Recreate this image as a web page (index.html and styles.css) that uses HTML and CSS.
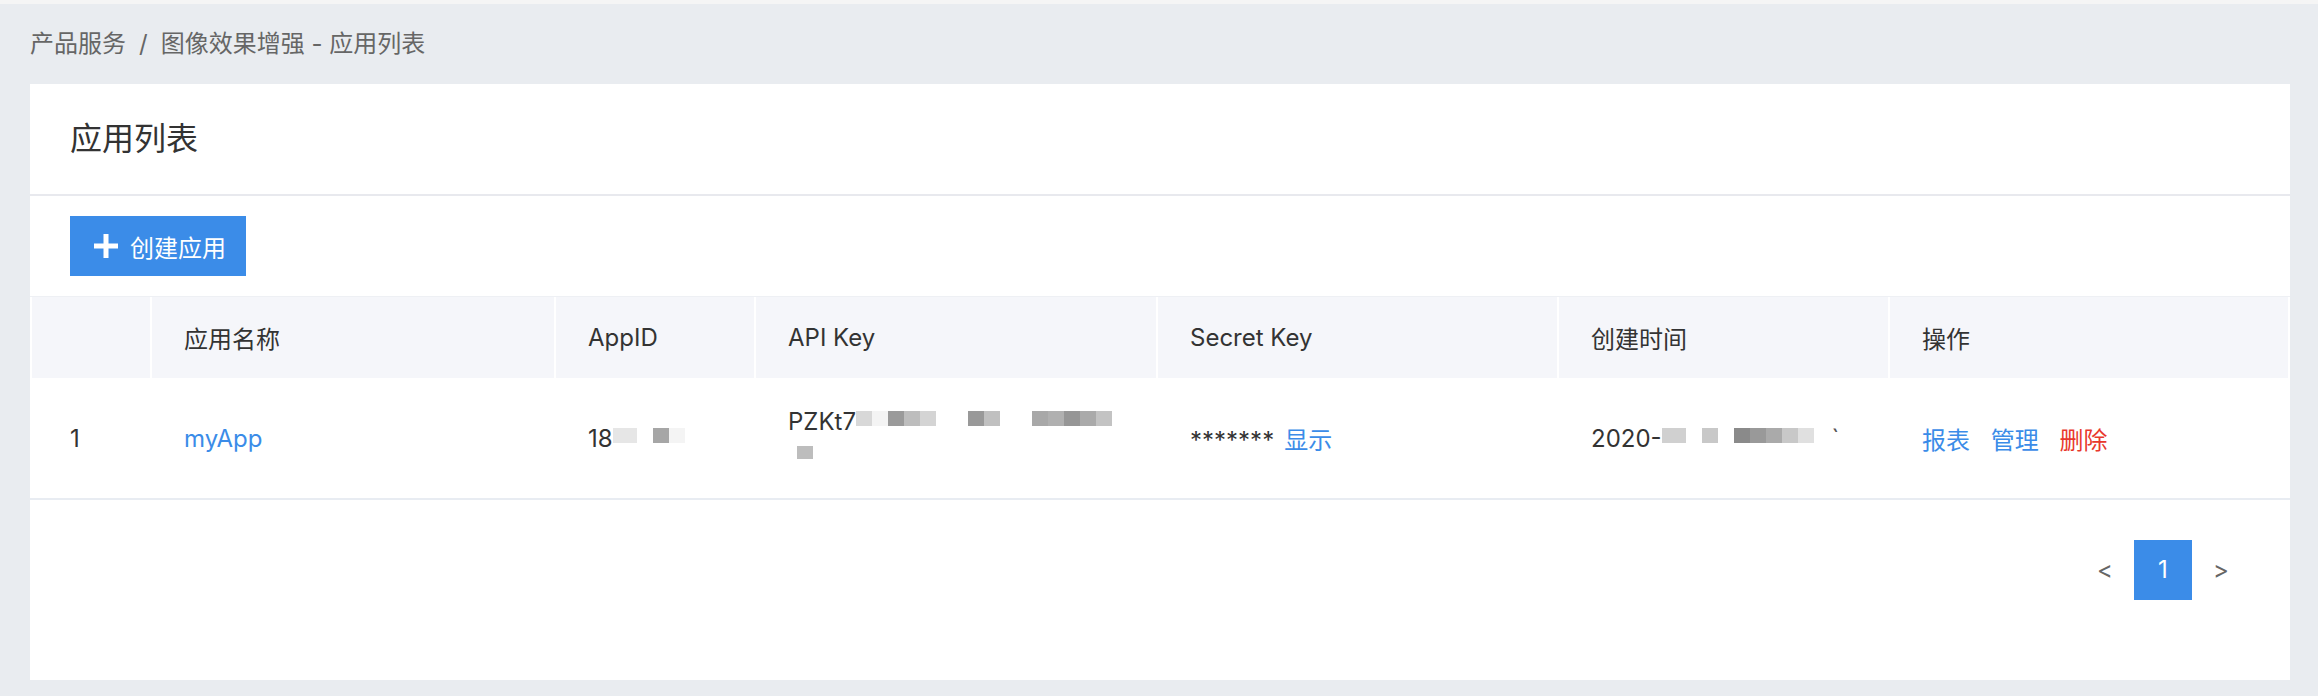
FILE: index.html
```html
<!DOCTYPE html>
<html lang="zh-CN">
<head>
  <meta charset="UTF-8">
  <title>应用列表</title>
  <link rel="stylesheet" href="styles.css">
</head>
<body>
  <div class="topbar"></div>
  <div class="page">
    <div class="breadcrumb">产品服务<span class="sep">/</span>图像效果增强 - 应用列表</div>

    <div class="card">
      <div class="card-head">应用列表</div>

      <div class="toolbar">
        <button class="btn-primary">
          <svg class="plus" width="24" height="24" viewBox="0 0 24 24"><rect x="9.5" y="0" width="5" height="24" fill="#fff"/><rect x="0" y="9.5" width="24" height="5" fill="#fff"/></svg>
          创建应用
        </button>
      </div>

      <div class="table-wrap">
        <table class="app-table">
          <colgroup>
            <col class="w-idx">
            <col class="w-name">
            <col class="w-id">
            <col class="w-key">
            <col class="w-secret">
            <col class="w-time">
            <col class="w-op">
          </colgroup>
          <thead>
            <tr>
              <th></th>
              <th>应用名称</th>
              <th>AppID</th>
              <th>API Key</th>
              <th>Secret Key</th>
              <th>创建时间</th>
              <th>操作</th>
            </tr>
          </thead>
          <tbody>
            <tr>
              <td class="idx">1</td>
              <td><a class="link" href="#">myApp</a></td>
              <td>18<span class="px s-e6 wide"></span><span class="px"></span><span class="px s-a6"></span><span class="px s-f4"></span></td>
              <td>
                <div class="key">PZKt7<span class="px s-d8"></span><span class="px s-f4"></span><span class="px s-9a"></span><span class="px s-bd"></span><span class="px s-d4"></span><span class="px"></span><span class="px"></span><span class="px s-99"></span><span class="px s-c0"></span><span class="px"></span><span class="px"></span><span class="px s-a8"></span><span class="px s-b0"></span><span class="px s-96"></span><span class="px s-aa"></span><span class="px s-c3"></span><br><span class="px s-bd indent"></span></div>
              </td>
              <td>*******<a class="link show" href="#">显示</a></td>
              <td>2020-<span class="px s-d0 wide"></span><span class="px"></span><span class="px s-c8"></span><span class="px"></span><span class="px s-8a"></span><span class="px s-99"></span><span class="px s-aa"></span><span class="px s-c8"></span><span class="px s-e0"></span><span class="tick">`</span></td>
              <td class="ops">
                <a class="link" href="#">报表</a>
                <a class="link" href="#">管理</a>
                <a class="link danger" href="#">删除</a>
              </td>
            </tr>
          </tbody>
        </table>
      </div>

      <div class="pager">
        <span class="page-btn">&lt;</span>
        <span class="page-btn active">1</span>
        <span class="page-btn">&gt;</span>
      </div>
    </div>
  </div>
</body>
</html>
```

FILE: styles.css
```css
body {
  margin: 0;
  background: #e9ecf0;
  font-family: Inter, "Noto Sans CJK SC", sans-serif;
  font-size: 24px;
  color: #333;
}
.topbar {
  height: 4px;
  background: #f5f5f5;
}
.page {
  padding: 0 28px 16px 30px;
}
.breadcrumb {
  height: 80px;
  line-height: 80px;
  color: #666;
}
.breadcrumb .sep {
  margin: 0 13px;
}
.card {
  background: #fff;
}
.card-head {
  height: 110px;
  line-height: 110px;
  padding-left: 40px;
  font-size: 32px;
  color: #333;
  border-bottom: 2px solid #e8e9ee;
}
.toolbar {
  padding: 20px 40px;
}
.btn-primary {
  display: inline-flex;
  align-items: center;
  gap: 12px;
  height: 60px;
  padding: 0 20px 0 24px;
  border: none;
  background: #3b8ce8;
  color: #fff;
  font-family: inherit;
  font-size: 24px;
}
.table-wrap {
  border-top: 1px solid #eef0f4;
  border-bottom: 2px solid #e8ecf2;
}
.app-table {
  width: 100%;
  table-layout: fixed;
  border-collapse: separate;
  border-spacing: 2px 0;
}
.w-idx { width: 118px; }
.w-name { width: 402px; }
.w-id { width: 198px; }
.w-key { width: 400px; }
.w-secret { width: 399px; }
.w-time { width: 329px; }
.w-op { width: 398px; }
th {
  height: 81px;
  padding: 0 0 0 32px;
  background: #f5f6fa;
  font-weight: normal;
  text-align: left;
  color: #333;
}
td {
  height: 120px;
  padding: 0 0 0 32px;
  white-space: nowrap;
  vertical-align: middle;
}
td.idx {
  padding-left: 38px;
}
.link {
  color: #3b8ce8;
  text-decoration: none;
}
.link.danger {
  color: #e8382d;
}
.link.show {
  margin-left: 10px;
}
.ops .link {
  margin-right: 14px;
}
.key {
  line-height: 33px;
}
.px {
  display: inline-block;
  width: 16px;
  height: 15px;
  vertical-align: 4px;
}
.px.wide { width: 24px; }
.px.indent { margin-left: 9px; height: 13px; }
.s-f4 { background: #f4f4f4; }
.s-e6 { background: #e6e6e6; }
.s-e0 { background: #e0e0e0; }
.s-d8 { background: #d8d8d8; }
.s-d4 { background: #d4d4d4; }
.s-d0 { background: #d0d0d0; }
.s-c8 { background: #c8c8c8; }
.s-c3 { background: #c3c3c3; }
.s-c0 { background: #c0c0c0; }
.s-bd { background: #bdbdbd; }
.s-b0 { background: #b0b0b0; }
.s-aa { background: #aaaaaa; }
.s-a8 { background: #a8a8a8; }
.s-a6 { background: #a6a6a6; }
.s-9a { background: #9a9a9a; }
.s-99 { background: #999999; }
.s-96 { background: #969696; }
.s-8a { background: #8a8a8a; }
.tick {
  margin-left: 18px;
  color: #555;
}
.pager {
  display: flex;
  justify-content: flex-end;
  padding: 40px 40px 80px;
}
.page-btn {
  width: 58px;
  height: 60px;
  line-height: 60px;
  text-align: center;
  color: #666;
}
.page-btn.active {
  background: #3b8ce8;
  color: #fff;
}
```
